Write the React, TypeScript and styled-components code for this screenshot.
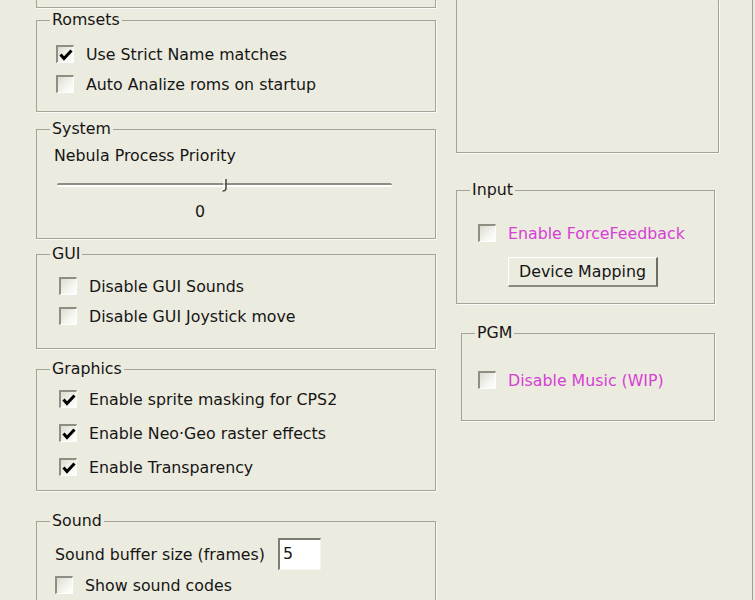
import React from "react";
import styled, { createGlobalStyle } from "styled-components";

const GlobalStyle = createGlobalStyle`
  html, body {
    margin: 0;
    padding: 0;
    background: #ecebdf;
  }
  body {
    font-family: "DejaVu Sans", Tahoma, sans-serif;
    font-size: 15.8px;
    color: #151515;
  }
`;

const Page = styled.div`
  width: 753px;
  height: 600px;
  overflow: hidden;
  box-sizing: border-box;
  padding-left: 36px;
  display: flex;
  align-items: flex-start;
  gap: 20px;
  border-right: 1px solid #a19f92;
`;

const Column = styled.div<{ $w: number }>`
  width: ${(p) => p.$w}px;
  display: flex;
  flex-direction: column;
  align-items: flex-start;
`;

// group box, the XP style etched frame with a caption
const Group = styled.fieldset<{
  $h: number;
  $mt?: number;
  $ml?: number;
  $w?: number;
  $pt?: number;
  $open?: boolean;
}>`
  box-sizing: border-box;
  min-width: 0;
  width: ${(p) => (p.$w ? `${p.$w}px` : "100%")};
  height: ${(p) => p.$h}px;
  margin: ${(p) => p.$mt || 0}px 0 0 ${(p) => p.$ml || 0}px;
  padding: ${(p) => p.$pt || 0}px 0 0 0;
  border: 1px solid #a4a396;
  border-top: ${(p) => (p.$open ? "none" : "1px solid #a4a396")};
  box-shadow: 1px 1px 0 #fbfbf7;
`;

const Caption = styled.legend`
  margin-left: 13px;
  padding: 0 2px;
  line-height: 20px;
  height: 20px;
`;

const Body = styled.div<{ $pl: number }>`
  padding-left: ${(p) => p.$pl}px;
  display: flex;
  flex-direction: column;
  align-items: flex-start;
`;

const Row = styled.label<{ $h?: number }>`
  display: flex;
  align-items: center;
  height: ${(p) => p.$h || 30}px;
`;

const Box = styled.span`
  box-sizing: border-box;
  width: 18px;
  height: 18px;
  margin-right: 12px;
  flex: none;
  display: flex;
  align-items: center;
  justify-content: center;
  border-top: 2px solid #8f8e82;
  border-left: 2px solid #8f8e82;
  border-right: 1px solid #fdfdfb;
  border-bottom: 1px solid #fdfdfb;
  background: linear-gradient(135deg, #dddcd0 0%, #f3f3ee 55%, #ffffff 100%);
`;

const Text = styled.span<{ $pink?: boolean }>`
  white-space: nowrap;
  color: ${(p) => (p.$pink ? "#d63fd5" : "#151515")};
`;

const Plain = styled.div`
  height: 20px;
  line-height: 20px;
  white-space: nowrap;
`;

const SliderWrap = styled.div`
  position: relative;
  width: 335px;
  height: 20px;
  margin: 9px 0 0 3px;
  display: flex;
  align-items: center;
`;

const Track = styled.div`
  width: 100%;
  height: 2px;
  background: #8e8d80;
  border-bottom: 2px solid #ffffff;
  border-radius: 2px;
`;

const Thumb = styled.svg`
  position: absolute;
  top: 4px;
`;

const ValueText = styled.div`
  margin: 7px 0 0 141px;
  height: 20px;
  line-height: 20px;
`;

const SizeRow = styled.div`
  display: flex;
  align-items: center;
  height: 32px;
`;

const SizeLabel = styled.span`
  width: 223px;
  white-space: nowrap;
`;

const NumBox = styled.div`
  box-sizing: border-box;
  width: 43px;
  height: 32px;
  background: #fff;
  border-top: 2px solid #7e7d72;
  border-left: 2px solid #7e7d72;
  border-right: 1px solid #f4f3ec;
  border-bottom: 1px solid #f4f3ec;
  padding-left: 3px;
  line-height: 28px;
`;

const Button = styled.button`
  box-sizing: border-box;
  width: 150px;
  height: 30px;
  margin: 9px 0 0 30px;
  padding: 0;
  font: inherit;
  color: #151515;
  background: #ecebdf;
  border-top: 1px solid #ffffff;
  border-left: 1px solid #ffffff;
  border-right: 2px solid #6f6e64;
  border-bottom: 2px solid #8a897d;
`;

function Check({ on }: { on?: boolean }) {
  return (
    <Box>
      {on && (
        <svg width="14" height="12" viewBox="0 0 14 12">
          <path d="M1.5 5.5 L5 9.5 L12.5 1.5" fill="none" stroke="#000" strokeWidth="3" />
        </svg>
      )}
    </Box>
  );
}

function CheckRow({ label, on, pink, h }: { label: string; on?: boolean; pink?: boolean; h?: number }) {
  return (
    <Row $h={h}>
      <Check on={on} />
      <Text $pink={pink}>{label}</Text>
    </Row>
  );
}

function Slider({ value, min, max }: { value: number; min: number; max: number }) {
  const left = ((value - min) / (max - min)) * 335 - 4;
  return (
    <SliderWrap>
      <Track />
      <Thumb width="8" height="13" viewBox="0 0 8 13" style={{ left }}>
        <path d="M4 0 V9 Q4 11.5 1 11.5" fill="none" stroke="#fff" strokeWidth="1.2" transform="translate(-1 0)" />
        <path d="M5 0 V9 Q5 12 1.5 12" fill="none" stroke="#4d4c45" strokeWidth="1.6" />
      </Thumb>
    </SliderWrap>
  );
}

export default function App() {
  return (
    <>
      <GlobalStyle />
      <Page>
        <Column $w={400}>
          <Group $h={8} $open />
          <Group $h={102} $mt={2} $pt={9}>
            <Caption>Romsets</Caption>
            <Body $pl={19}>
              <CheckRow label="Use Strict Name matches" on />
              <CheckRow label="Auto Analize roms on startup" />
            </Body>
          </Group>
          <Group $h={120} $mt={7} $pt={7}>
            <Caption>System</Caption>
            <Body $pl={17}>
              <Plain>Nebula Process Priority</Plain>
              <Slider value={0} min={-2} max={2} />
              <ValueText>0</ValueText>
            </Body>
          </Group>
          <Group $h={105} $mt={5} $pt={7}>
            <Caption>GUI</Caption>
            <Body $pl={22}>
              <CheckRow label="Disable GUI Sounds" />
              <CheckRow label="Disable GUI Joystick move" />
            </Body>
          </Group>
          <Group $h={132} $mt={10} $pt={3}>
            <Caption>Graphics</Caption>
            <Body $pl={22}>
              <CheckRow label="Enable sprite masking for CPS2" on h={34} />
              <CheckRow label="Enable Neo·Geo raster effects" on h={34} />
              <CheckRow label="Enable Transparency" on h={34} />
            </Body>
          </Group>
          <Group $h={140} $mt={20} $pt={7}>
            <Caption>Sound</Caption>
            <Body $pl={18}>
              <SizeRow>
                <SizeLabel>Sound buffer size (frames)</SizeLabel>
                <NumBox>5</NumBox>
              </SizeRow>
              <CheckRow label="Show sound codes" />
            </Body>
          </Group>
        </Column>
        <Column $w={263}>
          <Group $h={153} $open />
          <Group $h={124} $w={259} $mt={27} $pt={18}>
            <Caption>Input</Caption>
            <Body $pl={21}>
              <CheckRow label="Enable ForceFeedback" pink />
              <Button type="button">Device Mapping</Button>
            </Body>
          </Group>
          <Group $h={98} $w={254} $mt={19} $ml={5} $pt={22}>
            <Caption>PGM</Caption>
            <Body $pl={16}>
              <CheckRow label="Disable Music (WIP)" pink />
            </Body>
          </Group>
        </Column>
      </Page>
    </>
  );
}
